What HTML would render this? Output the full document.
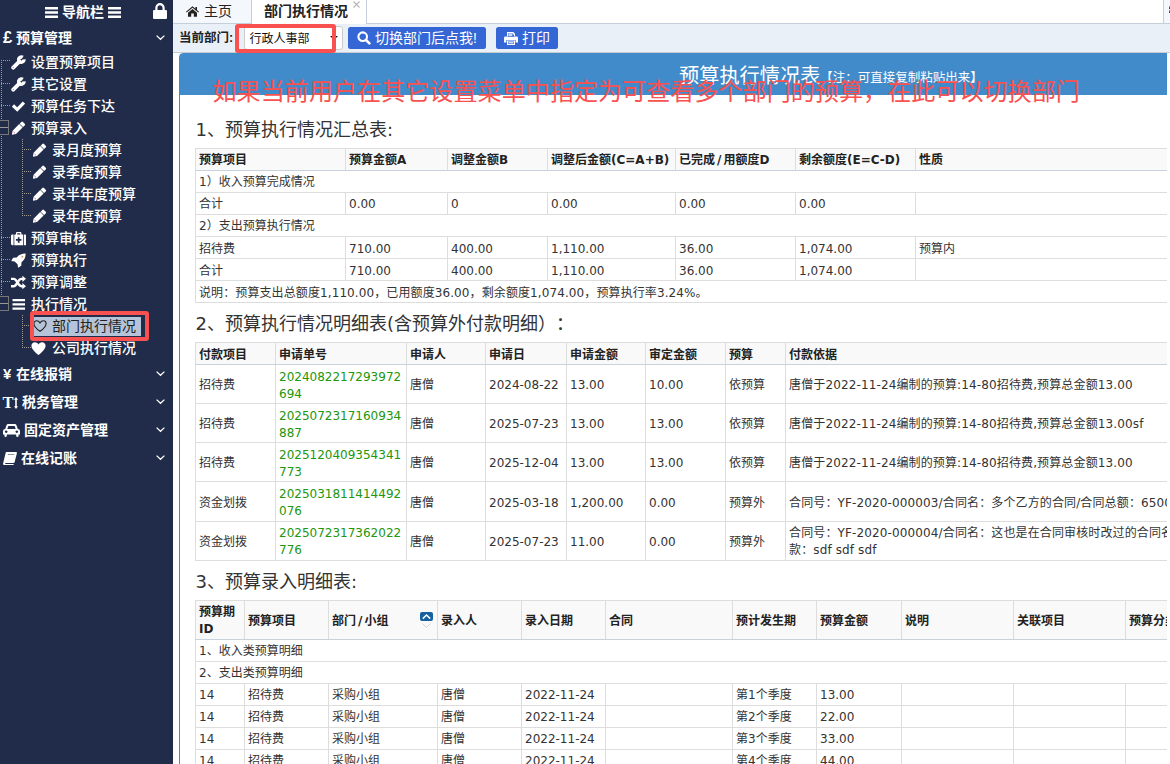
<!DOCTYPE html>
<html lang="zh-CN">
<head>
<meta charset="utf-8">
<title>部门执行情况</title>
<style>
*{box-sizing:border-box;}
html,body{margin:0;padding:0;}
body{width:1170px;height:764px;overflow:hidden;position:relative;background:#fff;
  font-family:"DejaVu Sans","Noto Sans CJK SC","Liberation Sans",sans-serif;font-size:12px;color:#333;}
/* ---------- sidebar ---------- */
#side{position:absolute;left:0;top:0;width:173px;height:764px;background:#202c4a;color:#fff;overflow:hidden;
  font-family:"Liberation Sans","Noto Sans CJK SC",sans-serif;}
#side .hd{position:absolute;left:0;top:0;width:173px;height:24px;}
#side .hd .t{position:absolute;left:0;width:166px;top:0.5px;height:24px;line-height:23px;text-align:center;font-size:14px;font-weight:bold;}
#side .acc{position:absolute;left:0;width:173px;height:28px;line-height:27px;font-size:14px;font-weight:bold;}
#side .acc .sym{position:absolute;top:0;font-size:15px;font-weight:bold;}
#side .acc .sym.serif{font-family:"Liberation Serif",serif;font-size:18px;}
#side .acc .at{position:absolute;top:1px;}
#side .acc svg.chev{position:absolute;left:156px;top:11px;}
#side .row{position:absolute;left:0;width:173px;height:22px;line-height:21px;font-size:14px;font-weight:500;white-space:nowrap;}
#side .row .ic{position:absolute;top:5px;width:14px;height:14px;}
#side .row .tx{position:absolute;top:2px;}
#side .row .seltx{color:#222;font-weight:400;}
#side .row .selbg{position:absolute;left:34px;top:3px;width:107px;height:19px;background:#b5c4d8;}
#side .vdot{position:absolute;width:1px;background:repeating-linear-gradient(to bottom,#a39c8e 0 1px,transparent 1px 2px);}
#side .hdot{position:absolute;height:1px;background:repeating-linear-gradient(to right,#a39c8e 0 1px,transparent 1px 2px);}
#side .expbox{position:absolute;left:-5px;width:14px;height:15px;border:1px solid #777;background:#202c4a;}
#side .expbox:after{content:"";position:absolute;left:3px;top:6px;width:9px;height:1px;background:#999;}
#side .redbox{position:absolute;border:4px solid #f95050;border-radius:3px;}
/* ---------- main ---------- */
#main{position:absolute;left:173px;top:0;width:997px;height:764px;background:#fff;overflow:hidden;}
#tabs{position:absolute;left:0;top:0;width:997px;height:24px;background:#fff;border-bottom:1px solid #c5cfdc;}
#tabs .tab{position:absolute;top:0;height:24px;line-height:22px;font-size:14px;color:#222;white-space:nowrap;font-family:"Liberation Sans","Noto Sans CJK SC",sans-serif;}
#tabs .t1{left:0;width:79px;background:#f4f7fb;border-bottom:1px solid #c5cfdc;border-right:1px solid #c5cfdc;}
#tabs .t2{left:79px;width:115px;background:#fff;border-right:1px solid #c5cfdc;height:24px;}
#tabs .tscroll{position:absolute;left:990px;top:0;width:8px;height:23px;background:#f4f7fb;border-left:1px solid #c5cfdc;}
#toolbar{position:absolute;left:0;top:24px;width:997px;height:29px;background:#eaf0f7;border-bottom:1px solid #c8ccd2;font-family:"Liberation Sans","Noto Sans CJK SC",sans-serif;}
#toolbar .lbl{position:absolute;left:6px;top:1.5px;line-height:25px;font-size:12.5px;font-weight:bold;color:#222;}
#toolbar .sel{position:absolute;left:70.5px;top:2px;width:99px;height:23.5px;background:#fff;border:1px solid #ccc;border-radius:3px;}
#toolbar .sel .st{position:absolute;left:5px;top:1.5px;line-height:21px;font-size:12px;color:#111;}
#toolbar .redbox{position:absolute;border:4px solid #f95050;border-radius:3px;}
#toolbar .btn{position:absolute;top:3px;height:22px;background:#3566d5;border-radius:2.5px;color:#fff;font-size:14px;line-height:21px;white-space:nowrap;}
#panel{position:absolute;left:6px;top:53px;width:1296px;height:720px;border:1px solid #428bca;border-radius:4px 4px 0 0;background:#fff;}
#clip{position:absolute;left:0;top:0;width:994px;height:764px;overflow:hidden;}
#phead{height:41px;background:#428bca;color:#fff;text-align:left;padding-left:499px;white-space:nowrap;line-height:22px;padding-top:10px;font-family:"Liberation Sans","Noto Sans CJK SC",sans-serif;}
#phead .ptitle{font-size:20.2px;position:relative;top:1px;}
#phead .pnote{font-size:12.5px;}
#pbody{padding:14px 15px 15px 15px;font-size:12px;line-height:17.07px;color:#333;}
#pbody h4{text-spacing-trim:space-all;font-family:"DejaVu Sans","Noto Sans CJK SC",sans-serif;font-weight:400;font-size:18px;line-height:19.8px;margin:9.5px 0 9.5px 0;padding-left:0.5px;color:#333;position:relative;top:1.5px;}
table.tb{border-collapse:collapse;table-layout:fixed;width:1264px;margin:0;}
table.tb th,table.tb td{border:1px solid #ddd;padding:3.5px 3px 0.5px 3px;text-align:left;vertical-align:middle;font-weight:400;overflow:hidden;}
table.tb th{font-weight:bold;background:#f9f9f9;border-bottom:1px solid #c8d2dc;color:#222;}
table.tb td.g{color:#22960c;}
table.tb th .sl{margin:0 2px;}
table.tb td.nw{white-space:nowrap;}
#t2 td:last-child{letter-spacing:0.13px;}
.rednote{position:absolute;left:32.5px;top:21.5px;font-size:24.1px;line-height:32px;white-space:nowrap;color:#f95050;font-weight:400;font-family:"Liberation Sans","Noto Sans CJK SC",sans-serif;}
</style>
</head>
<body>
<div id="side">
<div class="hd"><div class="t"><svg width="13" height="11" viewBox="0 0 13 11" style="vertical-align:-1.5px"><path fill="#fff" d="M0 0h13v2.5H0z M0 4.2h13v2.5H0z M0 8.4h13v2.5H0z"/></svg> 导航栏 <svg width="13" height="11" viewBox="0 0 13 11" style="vertical-align:-1.5px"><path fill="#fff" d="M0 0h13v2.5H0z M0 4.2h13v2.5H0z M0 8.4h13v2.5H0z"/></svg></div><svg style="position:absolute;left:153px;top:3px" width="14" height="16" viewBox="0 0 14 16"><path fill="#fff" fill-rule="evenodd" d="M1.2 7 H12.8 A1.2 1.2 0 0 1 14 8.2 V14.8 A1.2 1.2 0 0 1 12.8 16 H1.2 A1.2 1.2 0 0 1 0 14.8 V8.2 A1.2 1.2 0 0 1 1.2 7 Z M2.3 7 V4.7 A4.7 4.7 0 0 1 11.7 4.7 V7 H9.5 V4.7 A2.5 2.5 0 0 0 4.5 4.7 V7 Z"/></svg></div>
<div class="acc" style="top:24px"><b class="sym" style="left:3px;font-size:16.5px;top:-0.5px">£</b><span class="at" style="left:16px">预算管理</span><svg class="chev" width="9" height="6" viewBox="0 0 9 6"><path fill="none" stroke="#fff" stroke-width="1.3" d="M0.6 0.6 L4.5 4.3 L8.4 0.6"/></svg></div>
<div class="vdot" style="left:1px;top:60px;height:244px"></div>
<div class="hdot" style="left:1px;top:60px;width:10px"></div>
<div class="hdot" style="left:1px;top:83px;width:10px"></div>
<div class="hdot" style="left:1px;top:105px;width:10px"></div>
<div class="hdot" style="left:1px;top:237px;width:10px"></div>
<div class="hdot" style="left:1px;top:259px;width:10px"></div>
<div class="hdot" style="left:1px;top:281px;width:10px"></div>
<div class="vdot" style="left:22px;top:139px;height:77px"></div>
<div class="hdot" style="left:24px;top:149px;width:8px"></div>
<div class="hdot" style="left:24px;top:171px;width:8px"></div>
<div class="hdot" style="left:24px;top:193px;width:8px"></div>
<div class="hdot" style="left:24px;top:215px;width:8px"></div>
<div class="vdot" style="left:22px;top:315px;height:33px"></div>
<div class="hdot" style="left:24px;top:325px;width:8px"></div>
<div class="hdot" style="left:24px;top:347px;width:8px"></div>
<div class="expbox" style="top:120px"></div>
<div class="expbox" style="top:296px"></div>
<div class="row" style="top:50px"><svg class="ic" viewBox="0 0 14 14" style="width:14.8px;height:14.8px;top:5px;left:10.8px"><path fill="none" stroke="#fff" stroke-width="3.7" stroke-linecap="round" d="M2.1 11.9 L7.8 6.2"/><path fill="none" stroke="#fff" stroke-width="3.3" d="M12.3 4.17 A2.5 2.5 0 1 1 11.16 2.2"/><circle cx="2.2" cy="11.8" r="0.7" fill="#9ab"/></svg><span class="tx" style="left:31px">设置预算项目</span></div>
<div class="row" style="top:72px"><svg class="ic" viewBox="0 0 14 14" style="width:14.8px;height:14.8px;top:5px;left:10.8px"><path fill="none" stroke="#fff" stroke-width="3.7" stroke-linecap="round" d="M2.1 11.9 L7.8 6.2"/><path fill="none" stroke="#fff" stroke-width="3.3" d="M12.3 4.17 A2.5 2.5 0 1 1 11.16 2.2"/><circle cx="2.2" cy="11.8" r="0.7" fill="#9ab"/></svg><span class="tx" style="left:31px">其它设置</span></div>
<div class="row" style="top:94px"><svg class="ic" viewBox="0 0 14 14" style="width:13.6px;height:13.6px;top:5px;left:11.7px"><path fill="none" stroke="#fff" stroke-width="3.3" d="M1 6.6 L5.4 10.9 L12.3 3.6"/></svg><span class="tx" style="left:31px">预算任务下达</span></div>
<div class="row" style="top:116px"><svg class="ic" viewBox="0 0 14 14" style="width:14px;height:14px;top:5px;left:11.5px"><path fill="#fff" d="M-0.2 13.9 L0.6 9.7 L7.2 3.1 L10.6 6.5 L4 13.1 Z M7.65 2.65 L9.3 1 a1.2 1.2 0 0 1 1.7 0 L12.7 2.7 a1.2 1.2 0 0 1 0 1.7 L11.05 6.05 Z"/><path d="M1.6 11 L2.8 12.2" stroke="#c24" stroke-width="0.8"/></svg><span class="tx" style="left:31px">预算录入</span></div>
<div class="row" style="top:138px"><svg class="ic" viewBox="0 0 14 14" style="width:14px;height:14px;top:5px;left:32.5px"><path fill="#fff" d="M-0.2 13.9 L0.6 9.7 L7.2 3.1 L10.6 6.5 L4 13.1 Z M7.65 2.65 L9.3 1 a1.2 1.2 0 0 1 1.7 0 L12.7 2.7 a1.2 1.2 0 0 1 0 1.7 L11.05 6.05 Z"/><path d="M1.6 11 L2.8 12.2" stroke="#c24" stroke-width="0.8"/></svg><span class="tx" style="left:52px">录月度预算</span></div>
<div class="row" style="top:160px"><svg class="ic" viewBox="0 0 14 14" style="width:14px;height:14px;top:5px;left:32.5px"><path fill="#fff" d="M-0.2 13.9 L0.6 9.7 L7.2 3.1 L10.6 6.5 L4 13.1 Z M7.65 2.65 L9.3 1 a1.2 1.2 0 0 1 1.7 0 L12.7 2.7 a1.2 1.2 0 0 1 0 1.7 L11.05 6.05 Z"/><path d="M1.6 11 L2.8 12.2" stroke="#c24" stroke-width="0.8"/></svg><span class="tx" style="left:52px">录季度预算</span></div>
<div class="row" style="top:182px"><svg class="ic" viewBox="0 0 14 14" style="width:14px;height:14px;top:5px;left:32.5px"><path fill="#fff" d="M-0.2 13.9 L0.6 9.7 L7.2 3.1 L10.6 6.5 L4 13.1 Z M7.65 2.65 L9.3 1 a1.2 1.2 0 0 1 1.7 0 L12.7 2.7 a1.2 1.2 0 0 1 0 1.7 L11.05 6.05 Z"/><path d="M1.6 11 L2.8 12.2" stroke="#c24" stroke-width="0.8"/></svg><span class="tx" style="left:52px">录半年度预算</span></div>
<div class="row" style="top:204px"><svg class="ic" viewBox="0 0 14 14" style="width:14px;height:14px;top:5px;left:32.5px"><path fill="#fff" d="M-0.2 13.9 L0.6 9.7 L7.2 3.1 L10.6 6.5 L4 13.1 Z M7.65 2.65 L9.3 1 a1.2 1.2 0 0 1 1.7 0 L12.7 2.7 a1.2 1.2 0 0 1 0 1.7 L11.05 6.05 Z"/><path d="M1.6 11 L2.8 12.2" stroke="#c24" stroke-width="0.8"/></svg><span class="tx" style="left:52px">录年度预算</span></div>
<div class="row" style="top:226px"><svg class="ic" viewBox="0 0 14 14" style="width:15.4px;height:15.4px;top:5px;left:10.5px"><path fill="#fff" fill-rule="evenodd" d="M1.3 3.2 H12.7 A1.3 1.3 0 0 1 14 4.5 V11.7 A1.3 1.3 0 0 1 12.7 13 H1.3 A1.3 1.3 0 0 1 0 11.7 V4.5 A1.3 1.3 0 0 1 1.3 3.2 Z M4.5 3.2 V2 A1 1 0 0 1 5.5 1 H8.5 A1 1 0 0 1 9.5 2 V3.2 H8.4 V2.1 H5.6 V3.2 Z M2.3 3.2 h0.7 v9.8 h-0.7z M11 3.2 h0.7 v9.8 h-0.7z M6.2 5.6 h1.6 v1.7 h1.7 v1.6 h-1.7 v1.7 h-1.6 v-1.7 h-1.7 v-1.6 h1.7z"/></svg><span class="tx" style="left:31px">预算审核</span></div>
<div class="row" style="top:248px"><svg class="ic" viewBox="0 0 14 14" style="width:15px;height:15px;top:4.5px;left:11px"><path fill="#fff" d="M13.6 0.4 C13.8 3.6 12.6 6.4 9.8 8.6 L9.6 12 L6.6 13.8 L6.1 10.6 L3.4 7.9 L0.2 7.4 L2 4.4 L5.4 4.2 C7.6 1.4 10.4 0.2 13.6 0.4 Z"/><circle cx="10.6" cy="3.4" r="0.9" fill="#c8a060"/></svg><span class="tx" style="left:31px">预算执行</span></div>
<div class="row" style="top:270px"><svg class="ic" viewBox="0 0 14 14" style="width:15px;height:15px;top:4.5px;left:10.5px"><g fill="none" stroke="#fff" stroke-width="2.3"><path d="M0 3.6 H2.6 C5.6 3.6 6.4 10.4 9.6 10.4 H11.4"/><path d="M0 10.4 H2.6 C5.6 10.4 6.4 3.6 9.6 3.6 H11.4"/></g><path fill="#fff" d="M10.6 0.7 L14 3.6 L10.6 6.5 Z M10.6 7.5 L14 10.4 L10.6 13.3 Z"/></svg><span class="tx" style="left:31px">预算调整</span></div>
<div class="row" style="top:292px"><svg class="ic" viewBox="0 0 14 14" style="width:14.6px;height:14.6px;top:5px;left:11.5px"><path fill="#fff" d="M0.5 1.8 h12 v2.2 h-12z M0.5 5.9 h12 v2.2 h-12z M0.5 10 h12 v2.2 h-12z"/></svg><span class="tx" style="left:31px">执行情况</span></div>
<div class="row" style="top:314px"><div class="selbg"></div><svg class="ic" viewBox="0 0 14 14" style="width:14px;height:14px;top:5px;left:32.5px"><path fill="none" stroke="#222" stroke-width="1.1" d="M7 12.3 C7 12.3 0.9 8 0.9 4.7 C0.9 2.8 2.2 1.8 3.7 1.8 C5.2 1.8 6.4 2.9 7 3.9 C7.6 2.9 8.8 1.8 10.3 1.8 C11.8 1.8 13.1 2.8 13.1 4.7 C13.1 8 7 12.3 7 12.3 Z"/></svg><span class="tx seltx" style="left:52px">部门执行情况</span></div>
<div class="row" style="top:336px"><svg class="ic" viewBox="0 0 14 14" style="width:15px;height:15px;top:4.7px;left:31.3px"><path fill="#fff" d="M7 13 C7 13 0.4 8.2 0.4 4.6 C0.4 2.4 2 1.2 3.7 1.2 C5.2 1.2 6.4 2.2 7 3.2 C7.6 2.2 8.8 1.2 10.3 1.2 C12 1.2 13.6 2.4 13.6 4.6 C13.6 8.2 7 13 7 13 Z"/></svg><span class="tx" style="left:52px">公司执行情况</span></div>
<div class="redbox" style="left:30px;top:311px;width:119px;height:30px"></div>
<div class="acc" style="top:360px"><b class="sym" style="left:3px">¥</b><span class="at" style="left:16px">在线报销</span><svg class="chev" width="9" height="6" viewBox="0 0 9 6"><path fill="none" stroke="#fff" stroke-width="1.3" d="M0.6 0.6 L4.5 4.3 L8.4 0.6"/></svg></div>
<div class="acc" style="top:388px"><b class="sym serif" style="left:2.5px;font-size:16.5px;top:1px">T</b><svg style="position:absolute;left:13.5px;top:8.5px" width="4" height="12" viewBox="0 0 4 12"><path fill="#fff" d="M2 0 L4 2.8 H2.8 V9.2 H4 L2 12 L0 9.2 H1.2 V2.8 H0Z"/></svg><span class="at" style="left:22px">税务管理</span><svg class="chev" width="9" height="6" viewBox="0 0 9 6"><path fill="none" stroke="#fff" stroke-width="1.3" d="M0.6 0.6 L4.5 4.3 L8.4 0.6"/></svg></div>
<div class="acc" style="top:416px"><svg style="position:absolute;left:3px;top:8px" width="17" height="13" viewBox="0 0 17 13"><path fill="#fff" fill-rule="evenodd" d="M2.2 5 L3.4 1.4 A2 2 0 0 1 5.3 0 H11.7 A2 2 0 0 1 13.6 1.4 L14.8 5 A2.2 2.2 0 0 1 17 7.2 V10.6 H15.6 V11.8 A1.2 1.2 0 0 1 13.2 11.8 V10.6 H3.8 V11.8 A1.2 1.2 0 0 1 1.4 11.8 V10.6 H0 V7.2 A2.2 2.2 0 0 1 2.2 5 Z M4.3 5 H12.7 L11.8 2.3 A0.6 0.6 0 0 0 11.3 1.9 H5.7 A0.6 0.6 0 0 0 5.2 2.3 Z M3.2 6.4 a1.3 1.3 0 1 0 0.01 0z M13.8 6.4 a1.3 1.3 0 1 0 0.01 0z"/></svg><span class="at" style="left:24px">固定资产管理</span><svg class="chev" width="9" height="6" viewBox="0 0 9 6"><path fill="none" stroke="#fff" stroke-width="1.3" d="M0.6 0.6 L4.5 4.3 L8.4 0.6"/></svg></div>
<div class="acc" style="top:444px"><svg style="position:absolute;left:3px;top:8px" width="14" height="13" viewBox="0 0 14 13"><path fill="#fff" fill-rule="evenodd" d="M3.6 0 H13 A1 1 0 0 1 13.9 1.3 L11.6 10.2 A1.2 1.2 0 0 1 10.5 11 H2.4 L2.2 11.9 H10.8 L10.5 13 H1.2 A1.2 1.2 0 0 1 0.1 11.5 L2.6 1 A1.3 1.3 0 0 1 3.6 0 Z M4.9 2.4 L4.75 3.1 H11.2 L11.35 2.4 Z"/></svg><span class="at" style="left:21px">在线记账</span><svg class="chev" width="9" height="6" viewBox="0 0 9 6"><path fill="none" stroke="#fff" stroke-width="1.3" d="M0.6 0.6 L4.5 4.3 L8.4 0.6"/></svg></div>
</div>
<div id="main">
  <div id="tabs"><div class="tab t1"><svg style="position:absolute;left:13px;top:6px" width="13" height="11" viewBox="0 0 13 11"><path fill="#222" d="M6.5 0.2 L9.4 2.7 V1 H11 V4.1 L13 5.8 L12.3 6.6 L6.5 1.7 L0.7 6.6 L0 5.8 Z M6.5 2.9 L11 6.7 V10.8 H7.8 V7.6 H5.2 V10.8 H2 V6.7 Z"/></svg><span style="position:absolute;left:31px;top:0">主页</span></div>
<div class="tab t2"><span style="position:absolute;left:12px;top:0;font-weight:bold">部门执行情况</span><svg style="position:absolute;left:101px;top:1px" width="7" height="7" viewBox="0 0 7 7"><path stroke="#b8b8b8" stroke-width="1.2" fill="none" d="M0.5 0.5 L6.5 6.5 M6.5 0.5 L0.5 6.5"/></svg></div>
<div class="tscroll"><svg style="position:absolute;left:5px;top:6px" width="6" height="10" viewBox="0 0 6 10"><path fill="#b8863a" d="M0 0 h6 v2 h-6z M0 4 h6 v2 h-6z"/><path fill="#2a3f7a" d="M0 1.6 h6 v1.4 h-6z M0 5.6 h6 v1.4 h-6z"/></svg></div>
</div>
  <div id="toolbar"><span class="lbl">当前部门:</span>
<div class="sel"><span class="st">行政人事部</span><svg style="position:absolute;right:4px;top:8.5px" width="8" height="4" viewBox="0 0 8 4"><path fill="#111" d="M0 0 H8 L4 4Z"/></svg></div>
<div class="redbox" style="left:62px;top:0px;width:101px;height:29px"></div>
<div class="btn" style="left:175px;width:138px"><svg style="position:absolute;left:9px;top:4px" width="14" height="14" viewBox="0 0 14 14"><circle cx="5.7" cy="5.7" r="4.3" fill="none" stroke="#fff" stroke-width="2.1"/><path stroke="#fff" stroke-width="2.6" stroke-linecap="round" d="M9 9 L12.4 12.4"/></svg><span style="position:absolute;left:27px;top:1px">切换部门后点我!</span></div>
<div class="btn" style="left:323px;width:62px"><svg style="position:absolute;left:8px;top:5px" width="14" height="13" viewBox="0 0 14 13"><path fill="#fff" fill-rule="evenodd" d="M3 0 H9.2 L11 1.8 V5 H3 Z M4 1 V4.2 H10 V2.4 H8.6 V1 Z M1.4 4.6 H12.6 A1.4 1.4 0 0 1 14 6 V10.4 H11.6 V8 H2.4 V10.4 H0 V6 A1.4 1.4 0 0 1 1.4 4.6 Z M3 8.6 H11 V13 H3 Z M4 9.6 V12 H10 V9.6 Z"/><path fill="#fff" d="M4.4 1.3 h3.8 v2.6 h-3.8z M4.4 10 h5.2 v1.6 h-5.2z" opacity="0.75"/></svg><span style="position:absolute;left:26px;top:1px">打印</span></div>
</div>
  <div id="clip"><div id="panel"><div id="phead"><span class="ptitle">预算执行情况表</span><span class="pnote">【注：可直接复制粘贴出来】</span></div>
<div id="pbody">
<h4>1、预算执行情况汇总表:</h4>
<table class="tb" id="t1">
<colgroup><col style="width:150px"><col style="width:102px"><col style="width:100px"><col style="width:128px"><col style="width:120px"><col style="width:120px"><col style="width:544px"></colgroup>
<thead><tr><th>预算项目</th><th>预算金额A</th><th>调整金额B</th><th>调整后金额(C=A+B)</th><th>已完成<span class="sl">/</span>用额度D</th><th>剩余额度(E=C-D)</th><th>性质</th></tr></thead>
<tbody>
<tr><td colspan="7">1）收入预算完成情况</td></tr>
<tr><td>合计</td><td>0.00</td><td>0</td><td>0.00</td><td>0.00</td><td>0.00</td><td></td></tr>
<tr><td colspan="7">2）支出预算执行情况</td></tr>
<tr><td>招待费</td><td>710.00</td><td>400.00</td><td>1,110.00</td><td>36.00</td><td>1,074.00</td><td>预算内</td></tr>
<tr><td>合计</td><td>710.00</td><td>400.00</td><td>1,110.00</td><td>36.00</td><td>1,074.00</td><td></td></tr>
<tr><td colspan="7" style="letter-spacing:0.1px">说明：预算支出总额度1,110.00，已用额度36.00，剩余额度1,074.00，预算执行率3.24%。</td></tr>
</tbody></table>
<h4>2、预算执行情况明细表(含预算外付款明细）：</h4>
<table class="tb" id="t2">
<colgroup><col style="width:80px"><col style="width:131px"><col style="width:79px"><col style="width:81px"><col style="width:79px"><col style="width:80px"><col style="width:60px"><col style="width:674px"></colgroup>
<thead><tr><th>付款项目</th><th>申请单号</th><th>申请人</th><th>申请日</th><th>申请金额</th><th>审定金额</th><th>预算</th><th>付款依据</th></tr></thead>
<tbody>
<tr><td>招待费</td><td class="g">2024082217293972<br>694</td><td>唐僧</td><td>2024-08-22</td><td>13.00</td><td>10.00</td><td>依预算</td><td>唐僧于2022-11-24编制的预算:14-80招待费,预算总金额13.00</td></tr>
<tr><td>招待费</td><td class="g">2025072317160934<br>887</td><td>唐僧</td><td>2025-07-23</td><td>13.00</td><td>13.00</td><td>依预算</td><td>唐僧于2022-11-24编制的预算:14-80招待费,预算总金额13.00sf</td></tr>
<tr><td>招待费</td><td class="g">2025120409354341<br>773</td><td>唐僧</td><td>2025-12-04</td><td>13.00</td><td>13.00</td><td>依预算</td><td>唐僧于2022-11-24编制的预算:14-80招待费,预算总金额13.00</td></tr>
<tr><td>资金划拨</td><td class="g">2025031811414492<br>076</td><td>唐僧</td><td>2025-03-18</td><td>1,200.00</td><td>0.00</td><td>预算外</td><td class="nw">合同号：YF-2020-000003/合同名：多个乙方的合同/合同总额：6500.00/付款：第1期</td></tr>
<tr><td>资金划拨</td><td class="g">2025072317362022<br>776</td><td>唐僧</td><td>2025-07-23</td><td>11.00</td><td>0.00</td><td>预算外</td><td class="nw">合同号：YF-2020-000004/合同名：这也是在合同审核时改过的合同名称/合同总额：1200.00/付<br>款：sdf sdf sdf</td></tr>
</tbody></table>
<h4>3、预算录入明细表:</h4>
<table class="tb" id="t3">
<colgroup><col style="width:49px"><col style="width:84px"><col style="width:109px"><col style="width:84px"><col style="width:84px"><col style="width:127px"><col style="width:84px"><col style="width:85px"><col style="width:112px"><col style="width:112px"><col style="width:112px"><col style="width:222px"></colgroup>
<thead><tr><th>预算期<br>ID</th><th>预算项目</th><th style="position:relative">部门<span class="sl">/</span>小组<svg style="position:absolute;right:4px;top:11px" width="13" height="17" viewBox="0 0 13 17"><rect x="0" y="0" width="13" height="9" rx="2" fill="#16619f"/><path d="M2.8 6.6 L6.5 3 L10.2 6.6" fill="none" stroke="#fff" stroke-width="1.5"/><path d="M2.6 11.6 L6.5 15.4 L10.4 11.6" fill="none" stroke="#d4d4d4" stroke-width="1"/></svg></th><th>录入人</th><th>录入日期</th><th>合同</th><th>预计发生期</th><th>预算金额</th><th>说明</th><th>关联项目</th><th>预算分类</th><th>备注</th></tr></thead>
<tbody>
<tr><td colspan="12">1、收入类预算明细</td></tr>
<tr><td colspan="12">2、支出类预算明细</td></tr>
<tr><td>14</td><td>招待费</td><td>采购小组</td><td>唐僧</td><td>2022-11-24</td><td></td><td>第1个季度</td><td>13.00</td><td></td><td></td><td></td><td></td></tr>
<tr><td>14</td><td>招待费</td><td>采购小组</td><td>唐僧</td><td>2022-11-24</td><td></td><td>第2个季度</td><td>22.00</td><td></td><td></td><td></td><td></td></tr>
<tr><td>14</td><td>招待费</td><td>采购小组</td><td>唐僧</td><td>2022-11-24</td><td></td><td>第3个季度</td><td>33.00</td><td></td><td></td><td></td><td></td></tr>
<tr><td>14</td><td>招待费</td><td>采购小组</td><td>唐僧</td><td>2022-11-24</td><td></td><td>第4个季度</td><td>44.00</td><td></td><td></td><td></td><td></td></tr>
<tr><td>14</td><td>招待费</td><td>采购小组</td><td>唐僧</td><td>2022-11-24</td><td></td><td>第1个季度</td><td>55.00</td><td></td><td></td><td></td><td></td></tr>
</tbody></table>
</div>
<div class="rednote">如果当前用户在其它设置菜单中指定为可查看多个部门的预算，在此可以切换部门</div>
</div></div>
</div>
</body>
</html>
